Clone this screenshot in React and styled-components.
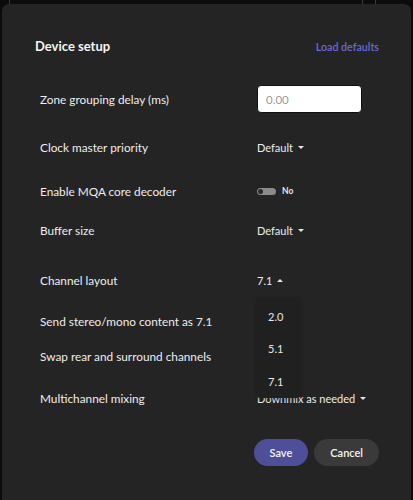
import React from "react";
import styled, { createGlobalStyle } from "styled-components";

const Global = createGlobalStyle`
  html, body { margin: 0; padding: 0; }
  body {
    width: 413px;
    height: 500px;
    overflow: hidden;
    background:
      linear-gradient(to right, transparent 9px, #3a3a3a 9px, #3a3a3a 10px, transparent 10px) top left / 100% 4px no-repeat,
      linear-gradient(to right, transparent 362px, #3a3a3a 362px, #3a3a3a 363px, transparent 363px, transparent 375px, #3a3a3a 375px, #3a3a3a 376px, transparent 376px) top left / 100% 4px no-repeat,
      #0b0b0b;
    font-family: Lato, "Noto Sans", sans-serif;
    color: #f2f2f2;
  }
`;

const Panel = styled.div`
  margin: 4px 2px 0 2px;
  height: 496px;
  box-sizing: border-box;
  background: #242424;
  border-radius: 7px 7px 0 0;
  padding: 30px 32px 0 33px;
  display: flex;
  flex-direction: column;
`;

const Header = styled.div`
  display: flex;
  justify-content: space-between;
  align-items: center;
  height: 24px;
`;

const Title = styled.h1`
  margin: 0;
  font-size: 13px;
  font-weight: 700;
  color: #f4f4f4;
`;

const LinkButton = styled.button`
  background: none;
  border: 0;
  padding: 0;
  font-family: inherit;
  font-size: 10.7px;
  font-weight: 600;
  color: #6a6ad2;
  cursor: pointer;
`;

const Row = styled.div`
  display: grid;
  grid-template-columns: 217px 1fr;
  align-items: center;
  height: 28px;
  margin-top: ${(p) => p.$gap}px;
  padding-left: 5px;
  position: relative;
`;

const Label = styled.div`
  font-size: 11.8px;
  color: #ededed;
`;

const Input = styled.input`
  width: 105px;
  height: 28px;
  box-sizing: border-box;
  border: 1px solid #101010;
  border-radius: 4px;
  background: #fff;
  padding: 0 8px;
  font-family: inherit;
  font-size: 11.5px;
  color: #333;
  outline: none;
  &::placeholder { color: #9a9a9a; }
`;

const SelectTrigger = styled.button`
  display: inline-flex;
  align-items: center;
  gap: 5px;
  background: none;
  border: 0;
  padding: 0;
  font-family: inherit;
  font-size: 11px;
  color: #ececec;
  justify-self: start;
`;

const Caret = styled.span`
  width: 0;
  height: 0;
  border-left: 3px solid transparent;
  border-right: 3px solid transparent;
  ${(p) => (p.$up ? "border-bottom: 3.5px solid #e8e8e8;" : "border-top: 3.5px solid #e8e8e8;")}
  margin-top: 1px;
`;

const ToggleWrap = styled.div`
  display: flex;
  align-items: center;
  gap: 6px;
`;

const Track = styled.span`
  width: 19px;
  height: 7px;
  border-radius: 4px;
  background: #8a8a8a;
  display: flex;
  align-items: center;
  padding: 0 1px;
  box-sizing: border-box;
`;

const Knob = styled.span`
  width: 5px;
  height: 5px;
  border-radius: 50%;
  background: #2a2a2a;
`;

const ToggleText = styled.span`
  font-size: 8.5px;
  font-weight: 700;
  color: #e6e6e6;
`;

const Menu = styled.div`
  position: absolute;
  left: 222px;
  top: 33px;
  width: 43px;
  padding: 1px 0 0;
  background: #202020;
  border-radius: 3px;
  box-shadow: 0 1px 4px rgba(0, 0, 0, 0.3);
  z-index: 5;
`;

const MenuItem = styled.div`
  height: 32.5px;
  display: flex;
  align-items: center;
  padding-left: 11px;
  font-size: 11px;
  color: #e8e8e8;
`;

const Footer = styled.div`
  display: flex;
  justify-content: flex-end;
  gap: 6px;
  margin-top: 27px;
`;

const Button = styled.button`
  height: 27px;
  padding: 0 ${(p) => p.$px}px;
  border: 0;
  border-radius: 14px;
  font-family: inherit;
  font-size: 11px;
  font-weight: 600;
  color: #f4f4f4;
  background: ${(p) => (p.$primary ? "#4e4f98" : "#3a3a3a")};
`;

export default function App() {
  return (
    <>
      <Global />
      <Panel>
        <Header>
          <Title>Device setup</Title>
          <LinkButton>Load defaults</LinkButton>
        </Header>
        <Row $gap={27}>
          <Label>Zone grouping delay (ms)</Label>
          <Input placeholder="0.00" />
        </Row>
        <Row $gap={20}>
          <Label>Clock master priority</Label>
          <SelectTrigger>
            Default <Caret />
          </SelectTrigger>
        </Row>
        <Row $gap={16}>
          <Label>Enable MQA core decoder</Label>
          <ToggleWrap>
            <Track>
              <Knob />
            </Track>
            <ToggleText>No</ToggleText>
          </ToggleWrap>
        </Row>
        <Row $gap={11}>
          <Label>Buffer size</Label>
          <SelectTrigger>
            Default <Caret />
          </SelectTrigger>
        </Row>
        <Row $gap={22}>
          <Label>Channel layout</Label>
          <SelectTrigger>
            7.1 <Caret $up />
          </SelectTrigger>
          <Menu>
            <MenuItem>2.0</MenuItem>
            <MenuItem>5.1</MenuItem>
            <MenuItem>7.1</MenuItem>
          </Menu>
        </Row>
        <Row $gap={13}>
          <Label>Send stereo/mono content as 7.1</Label>
          <div />
        </Row>
        <Row $gap={7}>
          <Label>Swap rear and surround channels</Label>
          <div />
        </Row>
        <Row $gap={14}>
          <Label>Multichannel mixing</Label>
          <SelectTrigger>
            Downmix as needed <Caret />
          </SelectTrigger>
        </Row>
        <Footer>
          <Button $primary $px={16}>Save</Button>
          <Button $px={16}>Cancel</Button>
        </Footer>
      </Panel>
    </>
  );
}
